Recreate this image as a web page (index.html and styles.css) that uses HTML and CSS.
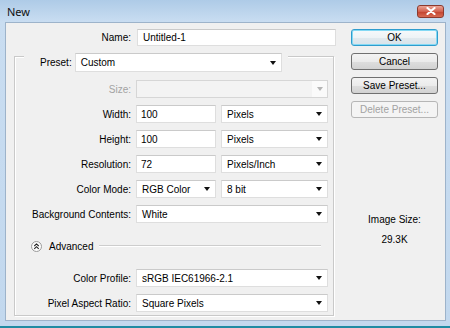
FILE: index.html
```html
<!DOCTYPE html>
<html lang="en">
<head>
    <meta charset="UTF-8">
    <title>New</title>
    <link rel="stylesheet" href="styles.css">
</head>
<body>
    <div class="window">
        <div class="titlebar">
            <span class="title">New</span>
            <span class="close">
                <svg width="10" height="8" viewBox="0 0 10 8"><path d="M1.5 1 L8.5 7 M8.5 1 L1.5 7" stroke="#fff" stroke-width="2.2" stroke-linecap="round"/></svg>
            </span>
        </div>

        <div class="client">
            <div class="main">
                <div class="row name-row">
                    <span class="lbl">Name:</span>
                    <div class="field">Untitled-1</div>
                </div>

                <div class="group">
                    <div class="group-head">
                        <span class="head-lbl">Preset:</span>
                        <div class="field select preset-select">Custom<span class="arrow"></span></div>
                    </div>

                    <div class="row disabled">
                        <span class="lbl">Size:</span>
                        <div class="field select"><span class="arrow-box"><span class="arrow"></span></span></div>
                    </div>
                    <div class="row">
                        <span class="lbl">Width:</span>
                        <div class="pair">
                            <div class="field num">100</div>
                            <div class="field select">Pixels<span class="arrow"></span></div>
                        </div>
                    </div>
                    <div class="row">
                        <span class="lbl">Height:</span>
                        <div class="pair">
                            <div class="field num">100</div>
                            <div class="field select">Pixels<span class="arrow"></span></div>
                        </div>
                    </div>
                    <div class="row">
                        <span class="lbl">Resolution:</span>
                        <div class="pair">
                            <div class="field num">72</div>
                            <div class="field select">Pixels/Inch<span class="arrow"></span></div>
                        </div>
                    </div>
                    <div class="row">
                        <span class="lbl">Color Mode:</span>
                        <div class="pair">
                            <div class="field select">RGB Color<span class="arrow"></span></div>
                            <div class="field select">8 bit<span class="arrow"></span></div>
                        </div>
                    </div>
                    <div class="row">
                        <span class="lbl">Background Contents:</span>
                        <div class="field select">White<span class="arrow"></span></div>
                    </div>

                    <div class="advanced">
                        <svg class="adv-icon" width="11" height="11" viewBox="0 0 11 11">
                            <circle cx="5.5" cy="5.5" r="5" fill="#fbfbfb" stroke="#9a9a9a"/>
                            <path d="M3.3 5 L5.5 2.9 L7.7 5 M3.3 7.8 L5.5 5.7 L7.7 7.8" fill="none" stroke="#222" stroke-width="1.1"/>
                        </svg>
                        <span>Advanced</span>
                        <span class="rule"></span>
                    </div>

                    <div class="row first-adv">
                        <span class="lbl">Color Profile:</span>
                        <div class="field select">sRGB IEC61966-2.1<span class="arrow"></span></div>
                    </div>
                    <div class="row">
                        <span class="lbl">Pixel Aspect Ratio:</span>
                        <div class="field select">Square Pixels<span class="arrow"></span></div>
                    </div>
                </div>
            </div>

            <div class="side">
                <div class="btn default">OK</div>
                <div class="btn">Cancel</div>
                <div class="btn">Save Preset...</div>
                <div class="btn off">Delete Preset...</div>

                <div class="img-size">
                    <div>Image Size:</div>
                    <div>29.3K</div>
                </div>
            </div>
        </div>
    </div>
</body>
</html>
```

FILE: styles.css
```css
* {
    margin: 0;
    padding: 0;
    box-sizing: border-box;
}

body {
    width: 450px;
    height: 328px;
    overflow: hidden;
    background: #1f8ba3;
    font-family: 'Liberation Sans', Arial, sans-serif;
    font-size: 10px;
    color: #000;
}

.window {
    height: 326px;
    display: flex;
    flex-direction: column;
    padding: 0 4px 5px 5px;
    background: linear-gradient(#aecbe7, #c9ddf1 22px, #c2d8ee);
}

.titlebar {
    height: 22px;
    display: flex;
    justify-content: space-between;
    align-items: center;
}

.title {
    font-family: 'Noto Sans', sans-serif;
    font-size: 11px;
    color: #111;
    padding-left: 2px;
}

.close {
    width: 27px;
    height: 13px;
    display: flex;
    justify-content: center;
    align-items: center;
    margin-right: 2px;
    border: 1px solid #8b3a2e;
    border-radius: 3px;
    background: linear-gradient(#eba596, #d2604d 50%, #c1412d 51%, #d86a52);
}

.client {
    flex: 1;
    display: flex;
    padding: 6px 7px 0 8px;
    background: #f0f0f0;
    border: 1px solid #9db3ca;
}

.main {
    width: 322px;
}

.row {
    display: grid;
    grid-template-columns: 116px 192px;
    column-gap: 5px;
    align-items: center;
    height: 18px;
    margin-top: 7px;
}

.name-row {
    grid-template-columns: 117px 199px;
    column-gap: 6px;
    height: 17px;
    margin-top: 0;
}

.name-row .field {
    height: 17px;
}

.lbl {
    text-align: right;
}

.disabled .lbl {
    color: #a3a3a3;
}

.field {
    height: 18px;
    display: flex;
    align-items: center;
    padding-left: 5px;
    background: #fff;
    border: 1px solid #dedede;
    border-top-color: #cacaca;
}

.num {
    padding-left: 4px;
}

.select {
    justify-content: space-between;
    padding-right: 5px;
}

.arrow {
    width: 0;
    height: 0;
    border-left: 3px solid transparent;
    border-right: 3px solid transparent;
    border-top: 4px solid #111;
}

.disabled .field {
    background: #f3f3f3;
    border-color: #d6d6d6;
    padding-right: 0;
}

.arrow-box {
    margin-left: auto;
    width: 15px;
    height: 16px;
    display: flex;
    justify-content: center;
    align-items: center;
    background: #fafafa;
}

.disabled .arrow {
    border-top-color: #b5b5b5;
}

.pair {
    display: grid;
    grid-template-columns: 80px 107px;
    column-gap: 5px;
}

.group {
    margin-top: 10px;
    width: 320px;
    height: 260px;
    border: 1px solid #c9c9c9;
    box-shadow: 1px 1px 0 #fff, inset 1px 1px 0 #fff;
}

.group-head {
    display: inline-flex;
    align-items: center;
    gap: 3px;
    margin: -7px 0 0 9px;
    padding: 0 6px 0 16px;
    background: #f0f0f0;
}

.preset-select {
    width: 207px;
    height: 19px;
}

.group-head + .row {
    margin-top: 8px;
}

.advanced {
    display: flex;
    align-items: center;
    height: 12px;
    margin-top: 17px;
    padding: 0 12px 0 16px;
}

.adv-icon {
    margin-right: 7px;
}

.rule {
    flex: 1;
    margin-left: 6px;
    height: 2px;
    border-top: 1px solid #cdcdcd;
    border-bottom: 1px solid #fff;
}

.first-adv {
    margin-top: 17px;
}

.side {
    margin-left: 15px;
    width: 88px;
    display: flex;
    flex-direction: column;
    gap: 7px;
}

.btn {
    height: 17px;
    line-height: 15px;
    text-align: center;
    border: 1px solid #707070;
    border-radius: 3px;
    background: linear-gradient(#f3f3f3, #ebebeb 50%, #dedede 51%, #d2d2d2);
}

.btn.default {
    border-color: #2f9ccd;
    box-shadow: inset 0 0 0 1px #84d9f4;
    background: linear-gradient(#f6f9fb, #eef3f6 50%, #e1e9ee 51%, #d8e3ea);
}

.btn.off {
    color: #a2a2a2;
    border-color: #b6b6b6;
    background: #f4f4f4;
}

.img-size {
    margin-top: 85px;
    text-align: center;
    line-height: 20px;
}
```
